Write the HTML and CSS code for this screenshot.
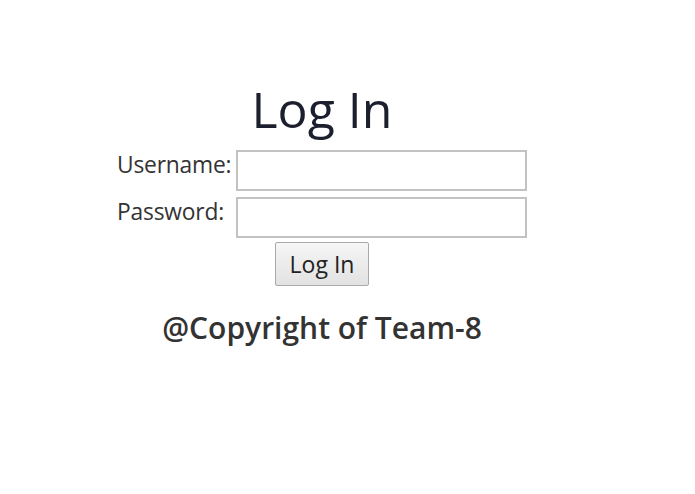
FILE: index.html
```html
<!DOCTYPE html>
<html>
<head>
<meta charset="utf-8">
<link rel="stylesheet" href="styles.css">
</head>
<body>
<div class="page">
  <h1 class="title">Log In</h1>
  <form class="login">
    <label class="label" for="u">Username:</label>
    <input class="field" id="u" type="text">
    <label class="label" for="p">Password:</label>
    <input class="field" id="p" type="password">
    <div class="actions"><button class="btn" type="button">Log In</button></div>
  </form>
  <p class="copy">@Copyright of Team-8</p>
</div>
</body>
</html>
```
FILE: styles.css
```css
html, body {
  margin: 0;
  padding: 0;
  background: #ffffff;
}
body {
  font-family: "Open Sans", "Noto Sans", sans-serif;
}
.page {
  width: 644px;
  display: flex;
  flex-direction: column;
  align-items: center;
  padding-top: 76px;
}
.title {
  margin: 0;
  font-size: 50px;
  font-weight: 500;
  line-height: 66px;
  color: #1c1f2e;
}
.login {
  display: grid;
  grid-template-columns: 117px 291px;
  column-gap: 2px;
  row-gap: 6px;
  margin-top: 8px;
}
.label {
  font-size: 22.8px;
  color: #333333;
  line-height: 30px;
  letter-spacing: -0.2px;
  white-space: nowrap;
}
.field {
  box-sizing: border-box;
  width: 291px;
  height: 41px;
  border: 2px solid #c2c2c2;
  margin: 0;
  background: #fff;
}
.actions {
  grid-column: 1 / span 2;
  display: flex;
  justify-content: center;
  margin-top: -2px;
}
.btn {
  box-sizing: border-box;
  width: 94px;
  height: 44px;
  font-family: "Open Sans", "Noto Sans", sans-serif;
  font-size: 23px;
  color: #222;
  border: 1px solid #a9a9a9;
  border-radius: 2px;
  background: linear-gradient(#f6f6f6, #e2e2e2);
  padding: 0;
}
.copy {
  margin: 21px 0 0;
  font-size: 30px;
  font-weight: 600;
  color: #333333;
}
```
